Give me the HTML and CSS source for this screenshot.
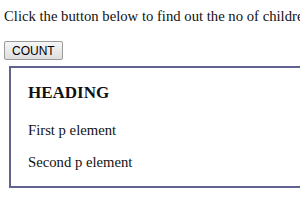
FILE: index.html
```html
<!DOCTYPE html>
<html lang="en">
<head>
    <meta charset="UTF-8">
    <meta name="viewport" content="width=device-width, initial-scale=1.0">
    <title>Child count</title>
    <link rel="stylesheet" href="styles.css">
</head>
<body>
    <p class="intro">Click the button below to find out the no of children of the div element.</p>
    <button onclick="countChildren()">COUNT</button>

    <div id="parent" class="box">
        <h3>HEADING</h3>
        <p>First p element</p>
        <p>Second p element</p>
    </div>

    <script>
        function countChildren() {
            const count = document.getElementById('parent').childElementCount;
            alert('Number of children: ' + count);
        }
    </script>
</body>
</html>
```

FILE: styles.css
```css
html { overflow: hidden; }
body { font-family: "Liberation Serif", "Times New Roman", serif; font-size: 14.7px; line-height: 17px; color: #111; margin: 8px 4px; width: 500px; }
.intro { margin: 0 0 16px; white-space: nowrap; }
button { font-family: "Liberation Sans", Arial, sans-serif; font-size: 12px; height: 19px; padding: 0 7px; margin: 0; color: #000; background: linear-gradient(#f6f6f6, #dedede); border: 1px solid #9a9a9a; border-radius: 2px; display: block; }
.box { margin: 6px 0 0 5px; border: 2px solid #62628e; padding: 0 17px; }
.box h3 { font-size: 17px; line-height: 20px; margin: 15px 0 19px; }
.box p { margin: 15px 0; }
```
